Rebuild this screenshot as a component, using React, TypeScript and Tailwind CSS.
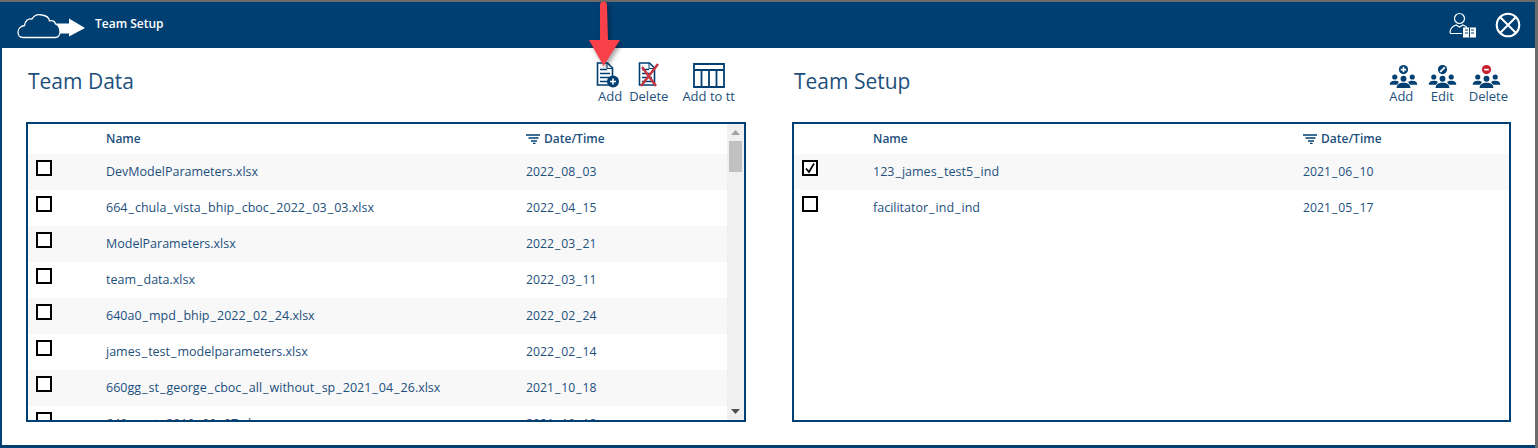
import React from 'react';

const navy = '#003f72';

const teamData = [
  ['DevModelParameters.xlsx', '2022_08_03'],
  ['664_chula_vista_bhip_cboc_2022_03_03.xlsx', '2022_04_15'],
  ['ModelParameters.xlsx', '2022_03_21'],
  ['team_data.xlsx', '2022_03_11'],
  ['640a0_mpd_bhip_2022_02_24.xlsx', '2022_02_24'],
  ['james_test_modelparameters.xlsx', '2022_02_14'],
  ['660gg_st_george_cboc_all_without_sp_2021_04_26.xlsx', '2021_10_18'],
  ['640_mpt_2019_09_07.xlsx', '2021_10_18'],
];

const teams = [
  ['123_james_test5_ind', '2021_06_10', true],
  ['facilitator_ind_ind', '2021_05_17', false],
] as const;

// the reference font has wider underscores than Open Sans
const Wide = ({ text }: { text: string }) => (
  <>
    {text.split('_').map((part, i) => (
      <React.Fragment key={i}>
        {i > 0 && <span className="px-[1px]">_</span>}
        {part}
      </React.Fragment>
    ))}
  </>
);

const SortIcon = () => (
  <svg width="14" height="10" viewBox="0 0 14 10" className="mr-[4px]">
    <path d="M0 1h14M2.5 4h10M5 7h6M7 9.5h2.5" stroke={navy} strokeWidth="1.4" fill="none" />
  </svg>
);

const Check = ({ checked }: { checked?: boolean }) => (
  <div className="w-4 h-4 border-2 border-black bg-white flex items-center justify-center shrink-0">
    {checked && (
      <svg width="12" height="12" viewBox="0 0 12 12">
        <path d="M2 6.500 5 10 10 1.500" stroke="#000" strokeWidth="1.700" fill="none" />
      </svg>
    )}
  </div>
);

const DocIcon = ({ children }: { children?: React.ReactNode }) => (
  <svg width="26" height="26" viewBox="0 0 26 26">
    <path d="M3.500 1h10l5 5v17h-15z" fill="#fff" stroke={navy} strokeWidth="1.600" />
    <path d="M13 1v5.500h5.500" fill="none" stroke={navy} strokeWidth="1" />
    <path d="M6 7.500h7M6 11.500h10M6 15.500h10M6 19.500h10" stroke={navy} strokeWidth="1.600" />
    {children}
  </svg>
);

const GroupIcon = ({ badge }: { badge: 'add' | 'edit' | 'delete' }) => (
  <svg width="29" height="23" viewBox="0 0 30 25">
    <g fill={navy}>
      <circle cx="5.500" cy="13" r="2.800" />
      <path d="M0 21.500c0-3 2-4.500 5.500-4.500 2 0 3.500.5 4.500 1.500l-2 3z" />
      <circle cx="24.500" cy="13" r="2.800" />
      <path d="M30 21.500c0-3-2-4.500-5.500-4.500-2 0-3.500.5-4.500 1.500l2 3z" />
      <circle cx="15" cy="15" r="3.200" />
      <path d="M7.500 25c0-4 3-5.800 7.500-5.800s7.500 1.800 7.500 5.800z" />
    </g>
    <circle cx="15" cy="5" r="5" fill={badge === 'delete' ? '#c8202f' : navy} />
    {badge === 'add' && <path d="M12 5h6M15 2v6" stroke="#fff" strokeWidth="1.800" />}
    {badge === 'edit' && <path d="M12.500 7.500 17.500 2.500" stroke="#fff" strokeWidth="2" />}
    {badge === 'delete' && <path d="M12.500 5h5" stroke="#fff" strokeWidth="1.800" />}
  </svg>
);

const Tool = ({ label, icon, className, iconClass }: { label: string; icon: React.ReactNode; className?: string; iconClass?: string }) => (
  <div className={`flex flex-col items-center text-[13px] leading-[16px] text-[#1d4f7c] ${className ?? ''}`}>
    <div className={`h-[26px] flex items-end ${iconClass ?? ''}`}>{icon}</div>
    <span>{label}</span>
  </div>
);

const Row = ({ name, date, checked, striped, firstW, nameW }: { name: string; date: string; checked?: boolean; striped: boolean; firstW: string; nameW: string }) => (
  <div className={`h-9 flex items-center shrink-0 text-[12.500px] text-[#1d4f7c] ${striped ? 'bg-[#f8f8f8]' : 'bg-white'}`}>
    <div className={`${firstW} pl-[8px] shrink-0 pb-[8px]`}>
      <Check checked={checked} />
    </div>
    <div className={`${nameW} shrink-0`}>
      <Wide text={name} />
    </div>
    <div className="text-[12.200px]">
      <Wide text={date} />
    </div>
  </div>
);

const HeaderRow = ({ firstW, nameW }: { firstW: string; nameW: string }) => (
  <div className="h-[30px] flex items-center shrink-0 text-[12px] font-semibold text-[#1d4f7c]">
    <div className={`${firstW} shrink-0`} />
    <div className={`${nameW} shrink-0`}>Name</div>
    <div className="flex items-center">
      <SortIcon />
      Date/Time
    </div>
  </div>
);

export default function App() {
  return (
    <div
      className="relative w-[1538px] h-[448px] overflow-hidden bg-[#6b6b6b] pt-[2px] pr-[3px]"
      style={{ fontFamily: '"Open Sans", "Noto Sans", sans-serif' }}
    >
      <div className="h-[446px] flex flex-col bg-white border-l-2 border-b-[3px] border-[#003f72]">
        {/* Title bar */}
        <div className="h-[46px] -ml-[2px] bg-[#003f72] flex items-center text-white shrink-0">
          <svg width="68" height="28" viewBox="0 0 68 28" className="ml-[17px] mt-[3px]">
            <path d="M36 10.500h16v-5L68 15 52 23.500v-3H36z" fill="#fff" />
            <path
              d="M6 24.500C2.500 24.500 1 22 1 19c0-3.500 3-6 6.500-6.500C8 8 11 5 15 6c2-3.500 6-5 10-4 4 .5 7 3 7.500 6 3-1 5.500.5 6 3 2.500 1 4.500 4 4.500 8 0 3-2 5.500-4.500 5.500z"
              fill="#003f72"
              stroke="#fff"
              strokeWidth="1.300"
            />
          </svg>
          <span className="ml-[10px] text-[12px] font-semibold mb-[3px]">Team Setup</span>
          <div className="ml-auto flex items-center">
            <svg width="28" height="26" viewBox="0 0 28 26" className="mr-[18px]">
              <circle cx="10.500" cy="6.500" r="5" fill="none" stroke="#fff" strokeWidth="1.200" />
              <path d="M1 21c0-5 3-7 6-8l3.500 2 3.500-2c2 .8 3.500 1.500 4 3M1 21.500h12" fill="none" stroke="#fff" strokeWidth="1.200" />
              <path d="M14 15.500h13v10H14z" fill="#fff" />
              <path d="M20.500 15.500v10M16 18h3M16 21h3M22 18h3M22 21h3" stroke="#003f72" strokeWidth="1" />
            </svg>
            <svg width="26" height="26" viewBox="0 0 26 26" className="mr-[14px]">
              <circle cx="13" cy="13" r="11.300" fill="none" stroke="#fff" strokeWidth="2" />
              <path d="M5 5l16 16M21 5 5 21" stroke="#fff" strokeWidth="2" />
            </svg>
          </div>
        </div>

        {/* Panels */}
        <div className="flex gap-[46px] pl-[24px] pt-[14px]">
          <section className="w-[720px]">
            <div className="h-[60px] flex items-start justify-between">
              <h2 className="text-[21px] leading-[30px] text-[#1d4f7c] mt-[4px] ml-[2px]">Team Data</h2>
              <div className="flex mr-[11px] gap-[6px]">
                <Tool
                  label="Add"
                  iconClass="-translate-x-[3px]"
                  icon={
                    <DocIcon>
                      <circle cx="19" cy="19.500" r="6" fill={navy} />
                      <path d="M16 19.500h6M19 16.500v6" stroke="#fff" strokeWidth="1.600" />
                    </DocIcon>
                  }
                />
                <Tool
                  label="Delete"
                  icon={
                    <DocIcon>
                      <path d="M5 24 22 2M6 5l14 19" stroke="#c8333f" strokeWidth="2.400" />
                    </DocIcon>
                  }
                />
                <Tool
                  label="Add to tt"
                  className="ml-[8px]"
                  icon={
                    <svg width="32" height="25" viewBox="0 0 32 25">
                      <path d="M1 1h30v23H1zM1 7h30M8.500 7v17M16 7v17M23.500 7v17" fill="#fff" stroke={navy} strokeWidth="1.800" />
                    </svg>
                  }
                />
              </div>
            </div>
            <div className="h-[300px] border-2 border-[#003f72] flex overflow-hidden">
              <div className="flex-1 flex flex-col min-w-0">
                <HeaderRow firstW="w-[78px]" nameW="w-[420px]" />
                {teamData.map(([name, date], i) => (
                  <Row key={name} name={name} date={date} striped={i % 2 === 0} firstW="w-[78px]" nameW="w-[420px]" />
                ))}
              </div>
              <div className="w-[17px] bg-[#f0f0f0] shrink-0 flex flex-col items-center justify-between relative">
                <svg width="9" height="5" viewBox="0 0 9 5" className="mt-[6px]">
                  <path d="M4.500 0 9 5H0z" fill="#a3a3a3" />
                </svg>
                <div className="w-[13px] h-[31px] bg-[#c1c1c1] absolute top-[17px]" />
                <svg width="9" height="5" viewBox="0 0 9 5" className="mb-[6px]">
                  <path d="M4.500 5 9 0H0z" fill="#505050" />
                </svg>
              </div>
            </div>
          </section>

          <section className="w-[719px]">
            <div className="h-[60px] flex items-start justify-between">
              <h2 className="text-[21px] leading-[30px] text-[#1d4f7c] mt-[4px] ml-[2px]">Team Setup</h2>
              <div className="flex mr-[3px] gap-[12px]">
                <Tool label="Add" iconClass="translate-x-[2px]" icon={<GroupIcon badge="add" />} />
                <Tool label="Edit" icon={<GroupIcon badge="edit" />} />
                <Tool label="Delete" iconClass="-translate-x-[2px]" icon={<GroupIcon badge="delete" />} />
              </div>
            </div>
            <div className="h-[300px] border-2 border-[#003f72] flex flex-col overflow-hidden">
              <HeaderRow firstW="w-[79px]" nameW="w-[430px]" />
              {teams.map(([name, date, checked], i) => (
                <Row key={name} name={name} date={date} checked={checked} striped={i % 2 === 0} firstW="w-[79px]" nameW="w-[430px]" />
              ))}
            </div>
          </section>
        </div>
      </div>

      {/* Red annotation arrow */}
      <svg width="40" height="68" viewBox="0 0 40 68" className="absolute left-[585px] top-0" style={{ filter: 'drop-shadow(2px 3px 2px rgba(0,0,0,.35))' }}>
        <path d="M15 5a3.500 3.500 0 0 1 7 0l1 35h12L18.500 66 4 40h11z" fill="#f8404a" />
      </svg>
    </div>
  );
}
